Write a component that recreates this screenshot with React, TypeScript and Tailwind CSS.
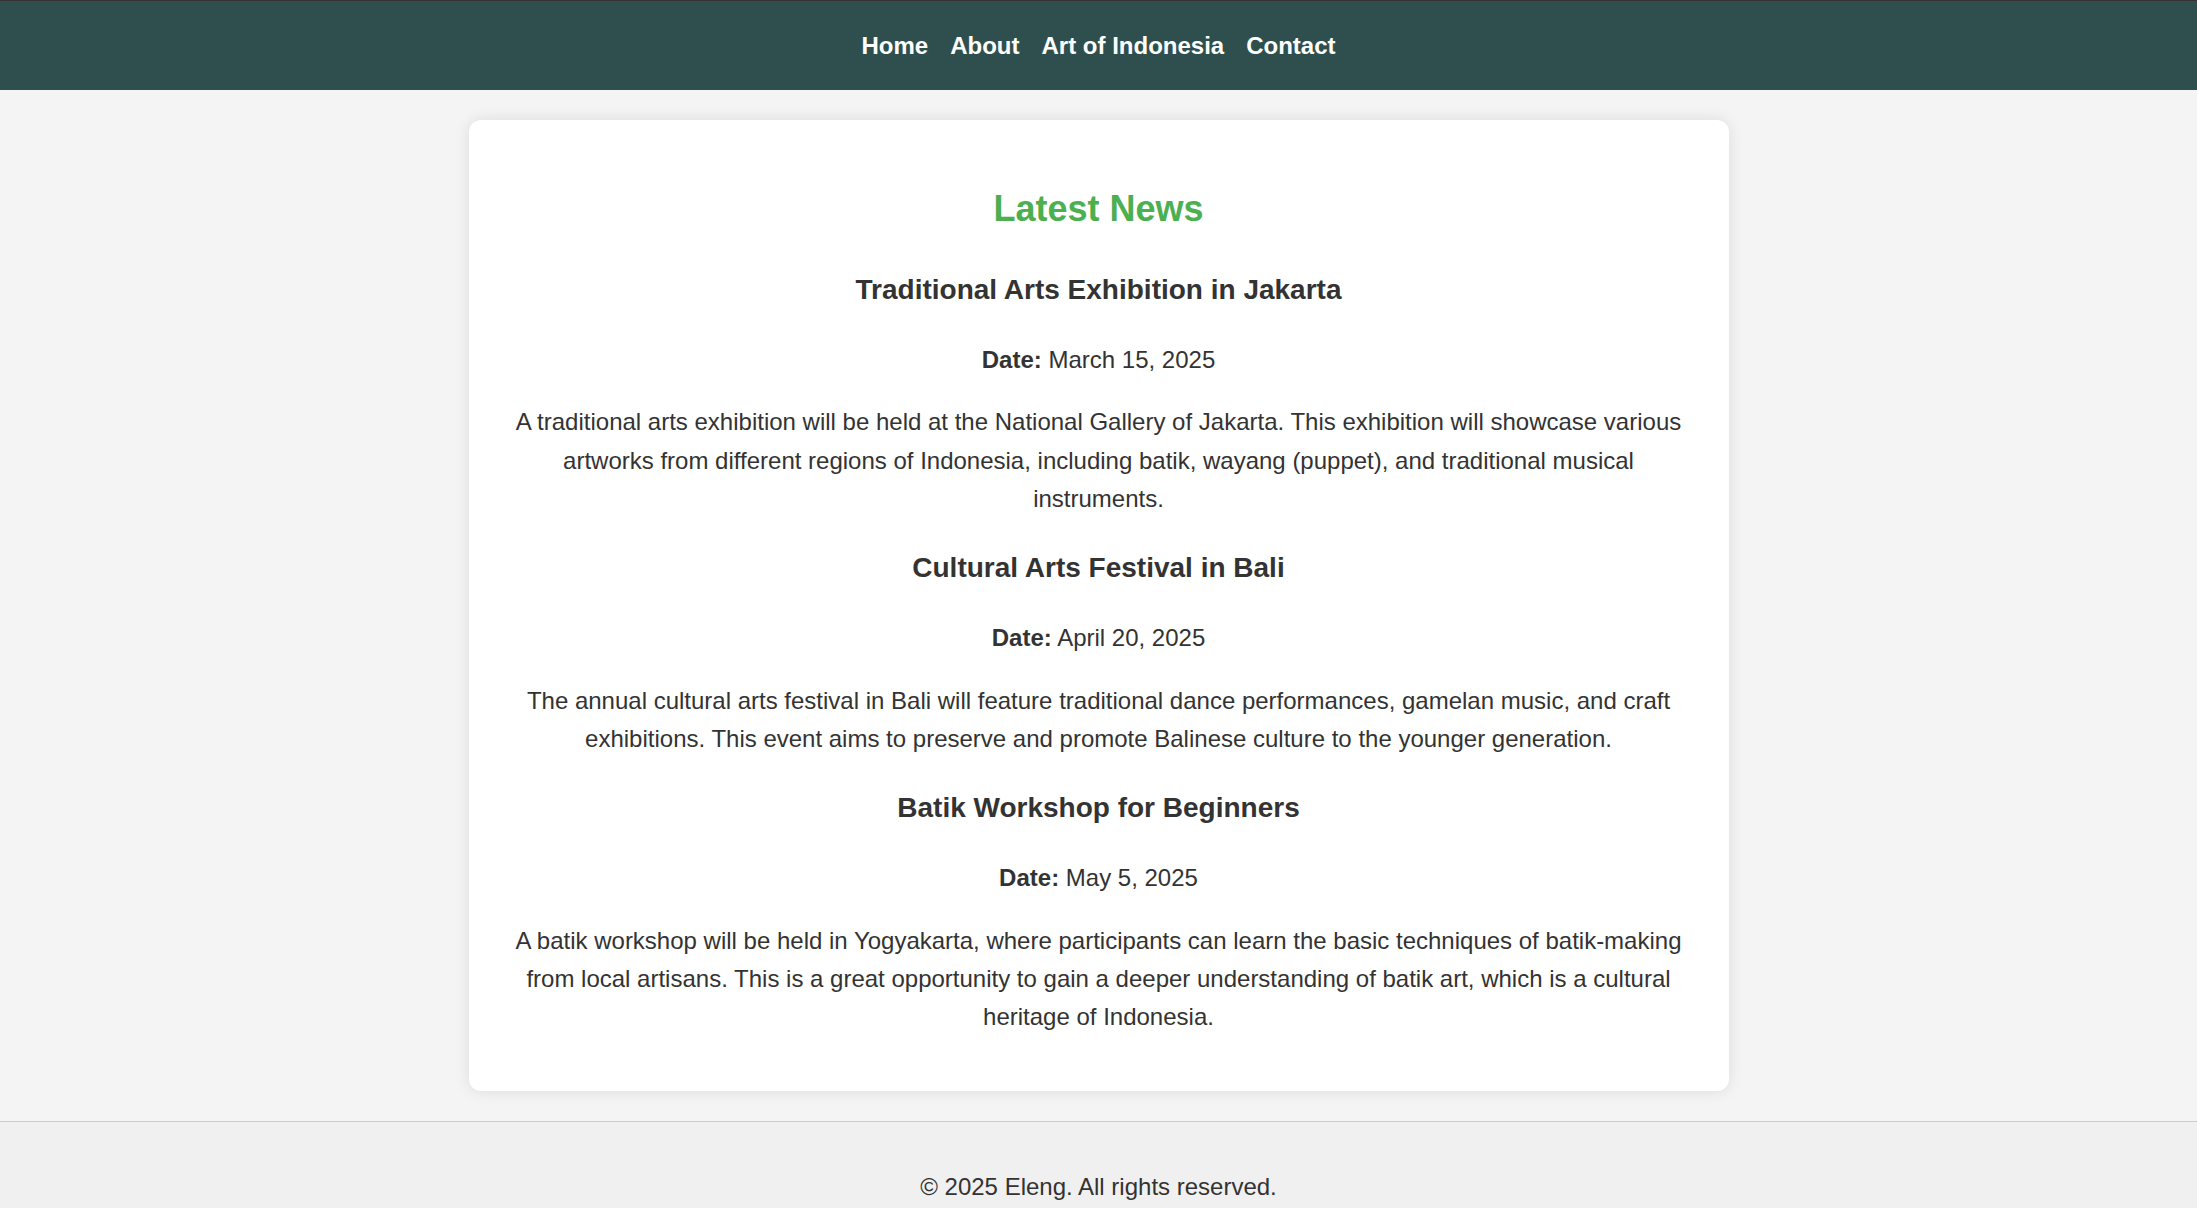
import React from 'react';

const news = [
  {
    title: 'Traditional Arts Exhibition in Jakarta',
    date: 'March 15, 2025',
    text: 'A traditional arts exhibition will be held at the National Gallery of Jakarta. This exhibition will showcase various artworks from different regions of Indonesia, including batik, wayang (puppet), and traditional musical instruments.',
  },
  {
    title: 'Cultural Arts Festival in Bali',
    date: 'April 20, 2025',
    text: 'The annual cultural arts festival in Bali will feature traditional dance performances, gamelan music, and craft exhibitions. This event aims to preserve and promote Balinese culture to the younger generation.',
  },
  {
    title: 'Batik Workshop for Beginners',
    date: 'May 5, 2025',
    text: 'A batik workshop will be held in Yogyakarta, where participants can learn the basic techniques of batik-making from local artisans. This is a great opportunity to gain a deeper understanding of batik art, which is a cultural heritage of Indonesia.',
  },
];

export default function App() {
  return (
    <div className="min-h-screen bg-[#f4f4f4] text-[24px] leading-[38.4px] text-[#333]" style={{ fontFamily: '"Liberation Sans", Arial, sans-serif' }}>
      {/* Header */}
      <header className="bg-[#2f4f4f] border-t border-[#333] pt-[26px] pb-[25px]">
        <nav className="flex justify-center gap-[22px] font-bold text-white">
          {['Home', 'About', 'Art of Indonesia', 'Contact'].map((item) => (
            <a key={item} href="#">
              {item}
            </a>
          ))}
        </nav>
      </header>

      {/* News card */}
      <main className="mx-auto mt-[30px] mb-[30px] w-[1260px] rounded-[12px] bg-white p-[30px] text-center shadow-[0_0_15px_rgba(0,0,0,0.1)]">
        <h2 className="mt-[30px] mb-[30px] text-[36px] leading-[57.6px] font-bold text-[#4caf50]">Latest News</h2>

        {news.map((item, idx) => (
          <article key={item.title}>
            <h3 className={`${idx === 0 ? 'mt-[30px]' : 'mt-[28px]'} mb-[28px] text-[28px] leading-[44.8px] font-bold`}>{item.title}</h3>
            <p className="mb-[24px]">
              <strong>Date:</strong> {item.date}
            </p>
            <p className="mb-[24px]">{item.text}</p>
          </article>
        ))}
      </main>

      {/* Footer */}
      <footer className="border-t border-[#ccc] bg-[#f0f0f0] py-[22px] text-center">
        <p className="my-[24px]">© 2025 Eleng. All rights reserved.</p>
      </footer>
    </div>
  );
}
